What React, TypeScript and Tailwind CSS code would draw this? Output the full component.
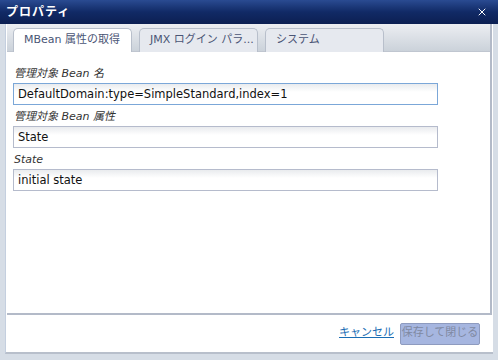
import { X } from 'lucide-react';

const font = { fontFamily: '"DejaVu Sans", "Noto Sans CJK JP", sans-serif' };

function Field({ label, value, focused }: { label: string; value: string; focused?: boolean }) {
  return (
    <div>
      <div className="h-[21px] pl-[1px] pt-[6px] text-[11px] italic leading-none text-[#333]">{label}</div>
      <div
        className={`h-[22px] w-[425px] border bg-gradient-to-b from-[#e9ebee] to-white bg-[length:100%_8px] bg-no-repeat px-[4px] text-[11.5px] leading-[21px] text-[#111] ${
          focused ? 'border-[#7ba7d8]' : 'border-[#b5bbcc]'
        }`}
      >
        {value}
      </div>
    </div>
  );
}

export default function App() {
  const tabs = ['MBean 属性の取得', 'JMX ログイン パラ...', 'システム'];

  return (
    <div className="flex h-[360px] w-[498px] flex-col bg-[#d6dde6]" style={font}>
      <div className="flex h-[24px] shrink-0 items-center justify-between bg-gradient-to-b from-[#2a4b92] via-[#112a66] to-[#0c1f52] pl-[6px] pr-[10px]">
        <span className="text-[12px] font-bold tracking-[1px] text-white">プロパティ</span>
        <X className="h-[12px] w-[12px] text-white" strokeWidth={2} />
      </div>

      <div className="mx-[5px] mb-[6px] flex flex-1 flex-col border-b-2 border-l border-[#b8bfcb] border-l-[#c4cfdf] bg-white">
        <div className="mx-[1px] flex flex-1 flex-col border-r-2 border-[#b3bac8]">
          <div className="flex h-[28px] items-end gap-[7px] border-b border-[#c0c6d0] bg-gradient-to-b from-[#eceef2] to-[#cbd2da] pl-[6px]">
            {tabs.map((t, i) => (
              <div
                key={t}
                className={`-mb-px flex h-[24px] w-[119px] items-center whitespace-nowrap rounded-t-[5px] border border-b-0 border-[#b8bfcb] pl-[10px] text-[11px] text-[#4a5575] ${
                  i === 0 ? 'bg-white' : 'bg-[#e6e9ef]'
                }`}
              >
                {t}
              </div>
            ))}
          </div>
          <div className="flex flex-1 flex-col border-b-2 border-[#b3bac8] pl-[6px] pt-[10px]">
            <Field label="管理対象 Bean 名" value="DefaultDomain:type=SimpleStandard,index=1" focused />
            <Field label="管理対象 Bean 属性" value="State" />
            <Field label="State" value="initial state" />
          </div>
        </div>
        <div className="flex h-[37px] items-center justify-end gap-[6px] pr-[13px]">
          <span className="whitespace-nowrap text-[11px] text-[#1a6db4] underline">キャンセル</span>
          <div className="flex h-[22px] w-[80px] items-center justify-center whitespace-nowrap rounded-[2px] border border-[#8e9bbf] bg-[#a6b6e0] text-[11px] text-[#7f89a2]">
            保存して閉じる
          </div>
        </div>
      </div>
    </div>
  );
}
